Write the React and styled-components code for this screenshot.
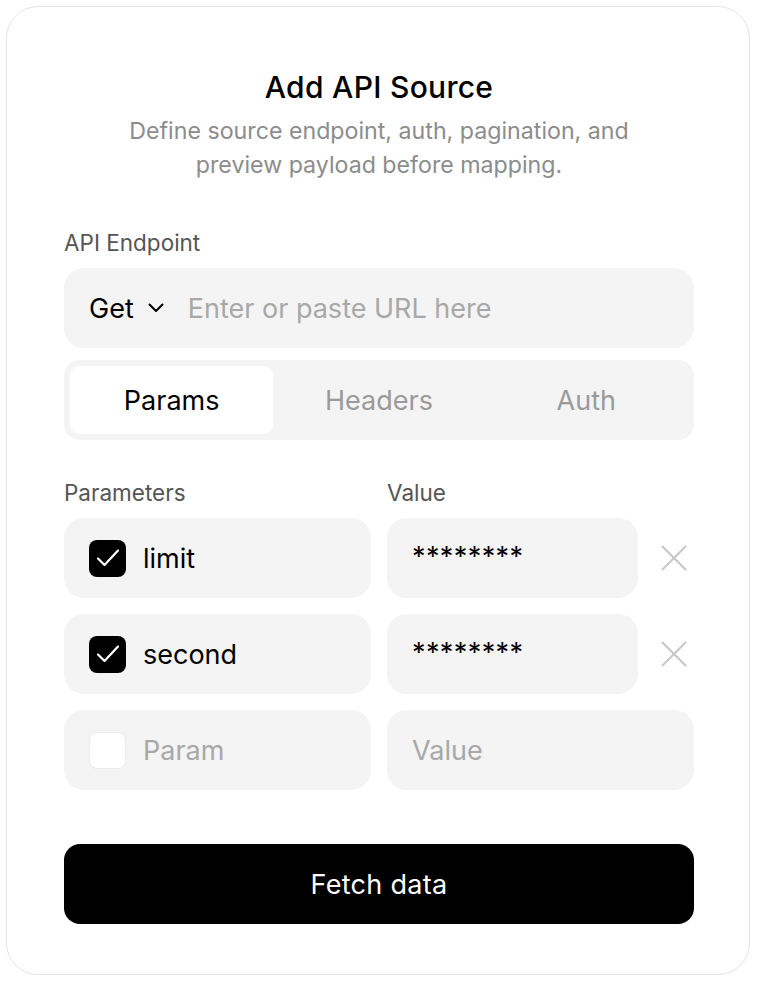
import React, { useState } from "react";
import styled, { createGlobalStyle } from "styled-components";

const GlobalStyle = createGlobalStyle`
    html, body {
        margin: 0;
        padding: 0;
        background: #fff;
    }
    body {
        font-family: Inter, "Noto Sans", "Liberation Sans", sans-serif;
        color: #000;
    }
`;

const Page = styled.div`
    padding: 6px;
`;

const Card = styled.div`
    box-sizing: border-box;
    width: 744px;
    height: 969px;
    border: 1px solid #e4e4e4;
    border-radius: 32px;
    background: #fff;
    padding: 62px 55px 0 57px;
    display: flex;
    flex-direction: column;
`;

const Title = styled.h1`
    margin: 0;
    font-size: 30px;
    line-height: 36px;
    font-weight: 500;
    letter-spacing: 0.3px;
    text-align: center;
`;

const Subtitle = styled.p`
    margin: 9px auto 0;
    width: 560px;
    font-size: 23.2px;
    line-height: 34px;
    color: #8c8c8c;
    text-align: center;
`;

const Label = styled.div`
    font-size: 22.5px;
    line-height: 24px;
    color: #555;
    margin-top: ${p => p.top || 0}px;
    margin-bottom: 13px;
`;

const Field = styled.div`
    box-sizing: border-box;
    height: 80px;
    background: #f4f4f4;
    border-radius: 20px;
    display: flex;
    align-items: center;
    padding: 0 25px;
    font-size: 27px;
    min-width: 0;
`;

const Method = styled.div`
    display: flex;
    align-items: center;
    gap: 14px;
    color: #000;
    margin-right: 24px;
`;

const Placeholder = styled.span`
    color: #a8a8a8;
`;

const Tabs = styled.div`
    margin-top: 12px;
    height: 80px;
    box-sizing: border-box;
    background: #f4f4f4;
    border-radius: 16px;
    padding: 6px;
    display: grid;
    grid-template-columns: repeat(3, 1fr);
    gap: 4px;
`;

const Tab = styled.button`
    border: none;
    border-radius: 10px;
    background: ${p => (p.active ? "#fff" : "transparent")};
    color: ${p => (p.active ? "#000" : "#9a9a9a")};
    font-family: inherit;
    letter-spacing: inherit;
    font-size: 27px;
    cursor: pointer;
`;

const HeaderRow = styled.div`
    display: grid;
    grid-template-columns: 307px 1fr;
    gap: 16px;
    margin-top: 41px;
`;

const Rows = styled.div`
    display: flex;
    flex-direction: column;
    gap: 16px;
`;

const Row = styled.div`
    display: grid;
    grid-template-columns: 307px 1fr;
    gap: 16px;
`;

const ValueCell = styled.div`
    display: flex;
    align-items: center;

    & > ${Field} {
        flex: 1;
    }
`;

const Value = styled.span`
    color: ${p => (p.muted ? "#a8a8a8" : "#000")};
    position: relative;
    top: ${p => (p.muted ? 0 : -2)}px;
    letter-spacing: ${p => (p.muted ? 0 : 0.4)}px;
`;

const Name = styled.span`
    color: ${p => (p.muted ? "#a8a8a8" : "#000")};
    margin-left: 17px;
`;

const Box = styled.span`
    box-sizing: border-box;
    width: 37px;
    height: 37px;
    border-radius: 8px;
    background: ${p => (p.checked ? "#000" : "#fff")};
    border: ${p => (p.checked ? "none" : "1px solid #ececec")};
    display: flex;
    align-items: center;
    justify-content: center;
    flex-shrink: 0;
`;

const Remove = styled.button`
    width: 56px;
    flex-shrink: 0;
    display: flex;
    justify-content: flex-end;
    padding: 0 7px 0 0;
    background: none;
    border: none;
    cursor: pointer;
`;

const FetchButton = styled.button`
    margin-top: 54px;
    height: 80px;
    border: none;
    border-radius: 16px;
    background: #000;
    color: #fff;
    font-family: inherit;
    letter-spacing: 0.3px;
    font-size: 27px;
    cursor: pointer;
`;

const Chevron = () => (
    <svg width="16" height="10" viewBox="0 0 16 10" fill="none">
        <path d="M1.5 1.5L8 8L14.5 1.5" stroke="#000" strokeWidth="2" strokeLinecap="round" strokeLinejoin="round" />
    </svg>
);

const Check = () => (
    <svg width="26" height="26" viewBox="0 0 26 26" fill="none">
        <path d="M3 13.5L9.5 20L23 5.5" stroke="#fff" strokeWidth="2.2" strokeLinecap="round" strokeLinejoin="round" />
    </svg>
);

const Cross = () => (
    <svg width="26" height="26" viewBox="0 0 26 26" fill="none">
        <path d="M1.5 1.5L24.5 24.5M24.5 1.5L1.5 24.5" stroke="#c6c6c6" strokeWidth="2" strokeLinecap="round" />
    </svg>
);

const params = [
    { name: "limit", value: "********", checked: true },
    { name: "second", value: "********", checked: true },
];

export default function App() {
    const [tab, setTab] = useState("Params");

    return (
        <Page>
            <GlobalStyle />
            <Card>
                <Title>Add API Source</Title>
                <Subtitle>Define source endpoint, auth, pagination, and preview payload before mapping.</Subtitle>

                <Label top={49}>API Endpoint</Label>
                <Field>
                    <Method>Get <Chevron /></Method>
                    <Placeholder>Enter or paste URL here</Placeholder>
                </Field>

                <Tabs>
                    {["Params", "Headers", "Auth"].map(t => (
                        <Tab key={t} active={t === tab} onClick={() => setTab(t)}>{t}</Tab>
                    ))}
                </Tabs>

                <HeaderRow>
                    <Label>Parameters</Label>
                    <Label>Value</Label>
                </HeaderRow>

                <Rows>
                    {params.map(p => (
                        <Row key={p.name}>
                            <Field>
                                <Box checked><Check /></Box>
                                <Name>{p.name}</Name>
                            </Field>
                            <ValueCell>
                                <Field><Value>{p.value}</Value></Field>
                                <Remove><Cross /></Remove>
                            </ValueCell>
                        </Row>
                    ))}
                    <Row>
                        <Field>
                            <Box />
                            <Name muted>Param</Name>
                        </Field>
                        <Field><Value muted>Value</Value></Field>
                    </Row>
                </Rows>

                <FetchButton>Fetch data</FetchButton>
            </Card>
        </Page>
    );
}
